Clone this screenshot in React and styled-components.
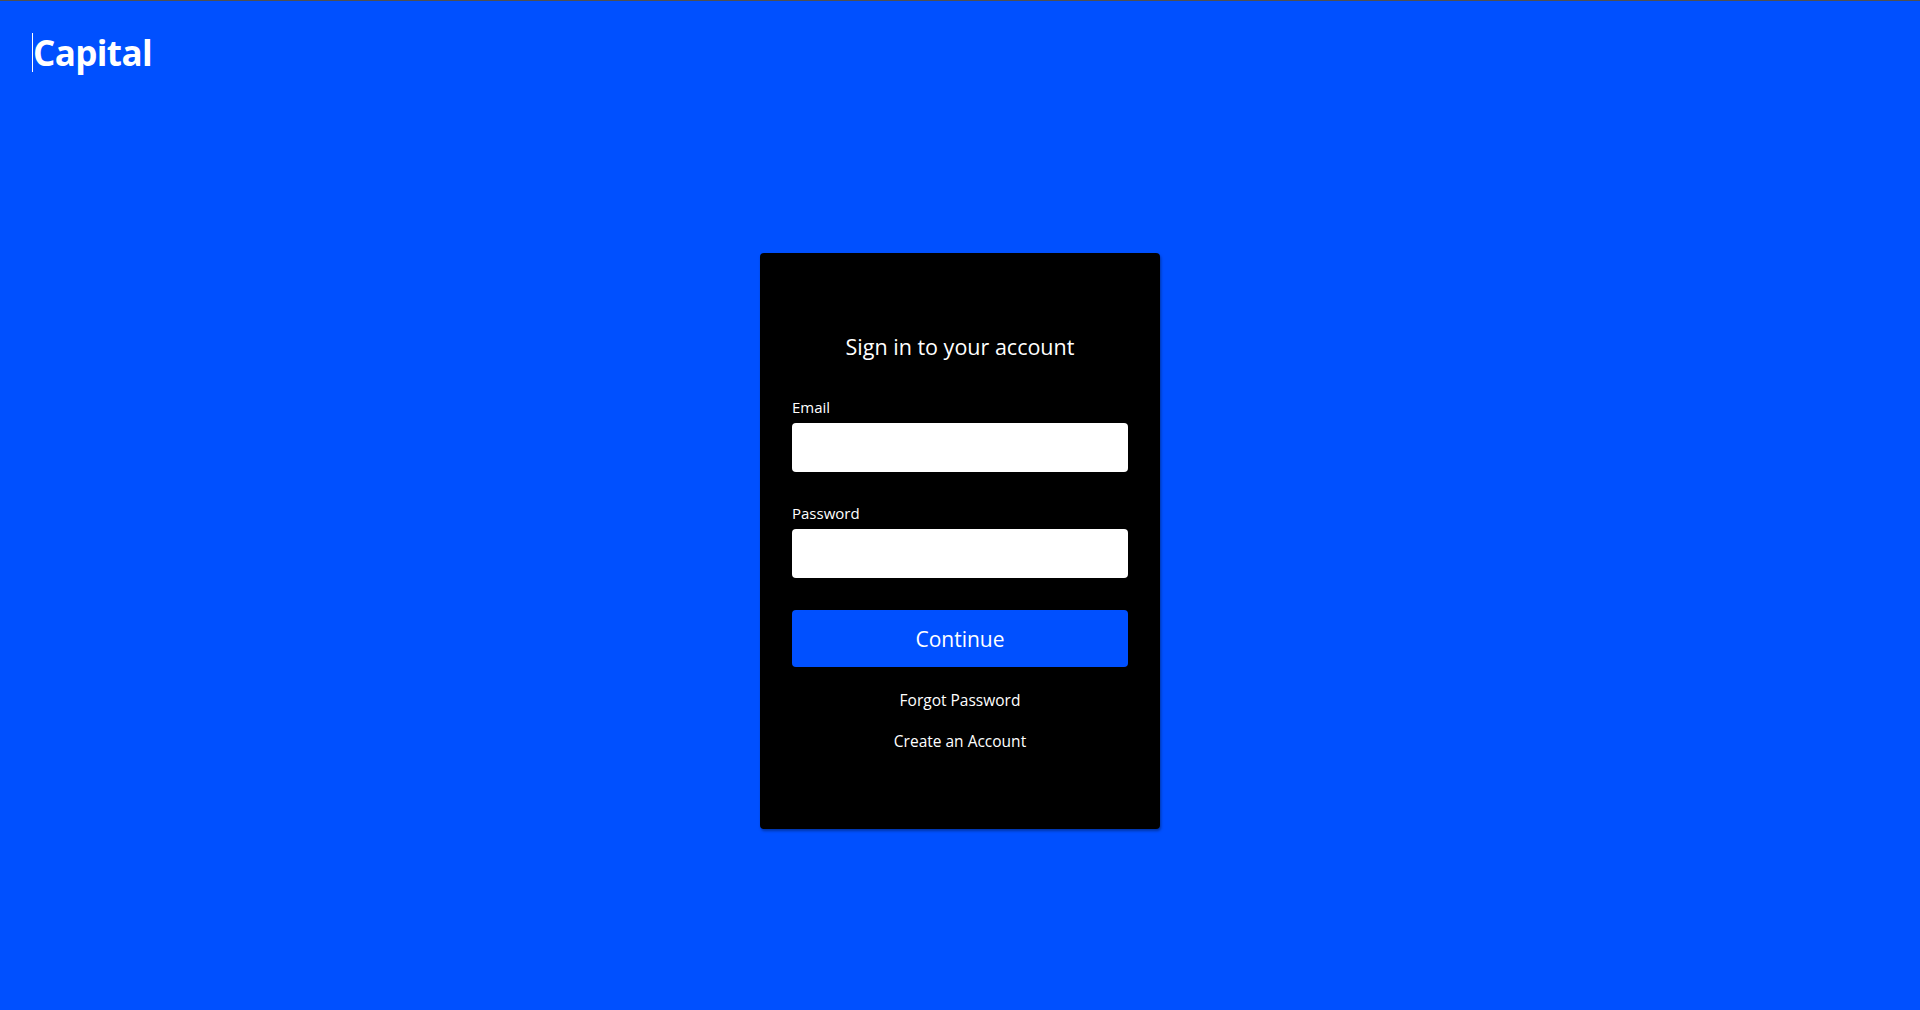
import React, { useState } from 'react';
import styled, { createGlobalStyle } from 'styled-components';

const GlobalStyle = createGlobalStyle`
    * { box-sizing: border-box; }
    html, body {
        margin: 0;
        padding: 0;
        background: #0050ff;
        font-family: "Open Sans", "Noto Sans", sans-serif;
        color: #fff;
    }
`;

const Page = styled.div`
    min-height: 100vh;
    display: flex;
    flex-direction: column;
    border-top: 1px solid #505050;
`;

const Header = styled.header`
    height: 71px;
    padding: 32px 0 0 32px;
`;

const Logo = styled.span`
    display: inline-flex;
    align-items: center;
    height: 39px;
    border-left: 1px solid #fff;
    font-size: 35px;
    font-weight: 700;
    letter-spacing: -0.6px;
    line-height: 1;
`;

const Main = styled.main`
    flex: 1;
    display: flex;
    align-items: center;
    justify-content: center;
`;

const Card = styled.form`
    width: 400px;
    padding: 81px 32px 79px;
    background: #000;
    border-radius: 4px;
    box-shadow: 1px 2px 3px rgba(0, 0, 0, 0.35);
    display: flex;
    flex-direction: column;
`;

const Title = styled.h2`
    margin: 0 0 38px;
    font-size: 21.5px;
    font-weight: 400;
    line-height: 26px;
    text-align: center;
`;

const Field = styled.div`
    display: flex;
    flex-direction: column;
    gap: 7px;
    margin-bottom: 32px;
`;

const Label = styled.label`
    font-size: 15px;
    line-height: 18px;
`;

const Input = styled.input`
    height: 49px;
    border: none;
    border-radius: 4px;
    background: #fff;
    padding: 0 12px;
    font-size: 16px;
    outline: none;
`;

const Button = styled.button`
    height: 57px;
    border: none;
    border-radius: 4px;
    background: #0050ff;
    color: #fff;
    font-family: inherit;
    font-size: 21px;
    cursor: pointer;
    margin-bottom: 24px;
`;

const LinkText = styled.a`
    display: block;
    text-align: center;
    font-size: 15.5px;
    line-height: 18px;
    color: #fff;
    text-decoration: none;
    margin-bottom: ${props => props.last ? '0' : '23px'};
    cursor: pointer;
`;

function App() {
    const [email, setEmail] = useState('');
    const [password, setPassword] = useState('');

    return (
        <>
            <GlobalStyle />
            <Page>
                <Header>
                    <Logo>Capital</Logo>
                </Header>
                <Main>
                    <Card onSubmit={e => e.preventDefault()}>
                        <Title>Sign in to your account</Title>
                        <Field>
                            <Label htmlFor='email'>Email</Label>
                            <Input id='email' type='email' value={email} onChange={e => setEmail(e.target.value)} />
                        </Field>
                        <Field>
                            <Label htmlFor='password'>Password</Label>
                            <Input id='password' type='password' value={password} onChange={e => setPassword(e.target.value)} />
                        </Field>
                        <Button type='submit'>Continue</Button>
                        <LinkText>Forgot Password</LinkText>
                        <LinkText last>Create an Account</LinkText>
                    </Card>
                </Main>
            </Page>
        </>
    );
}

export default App;
